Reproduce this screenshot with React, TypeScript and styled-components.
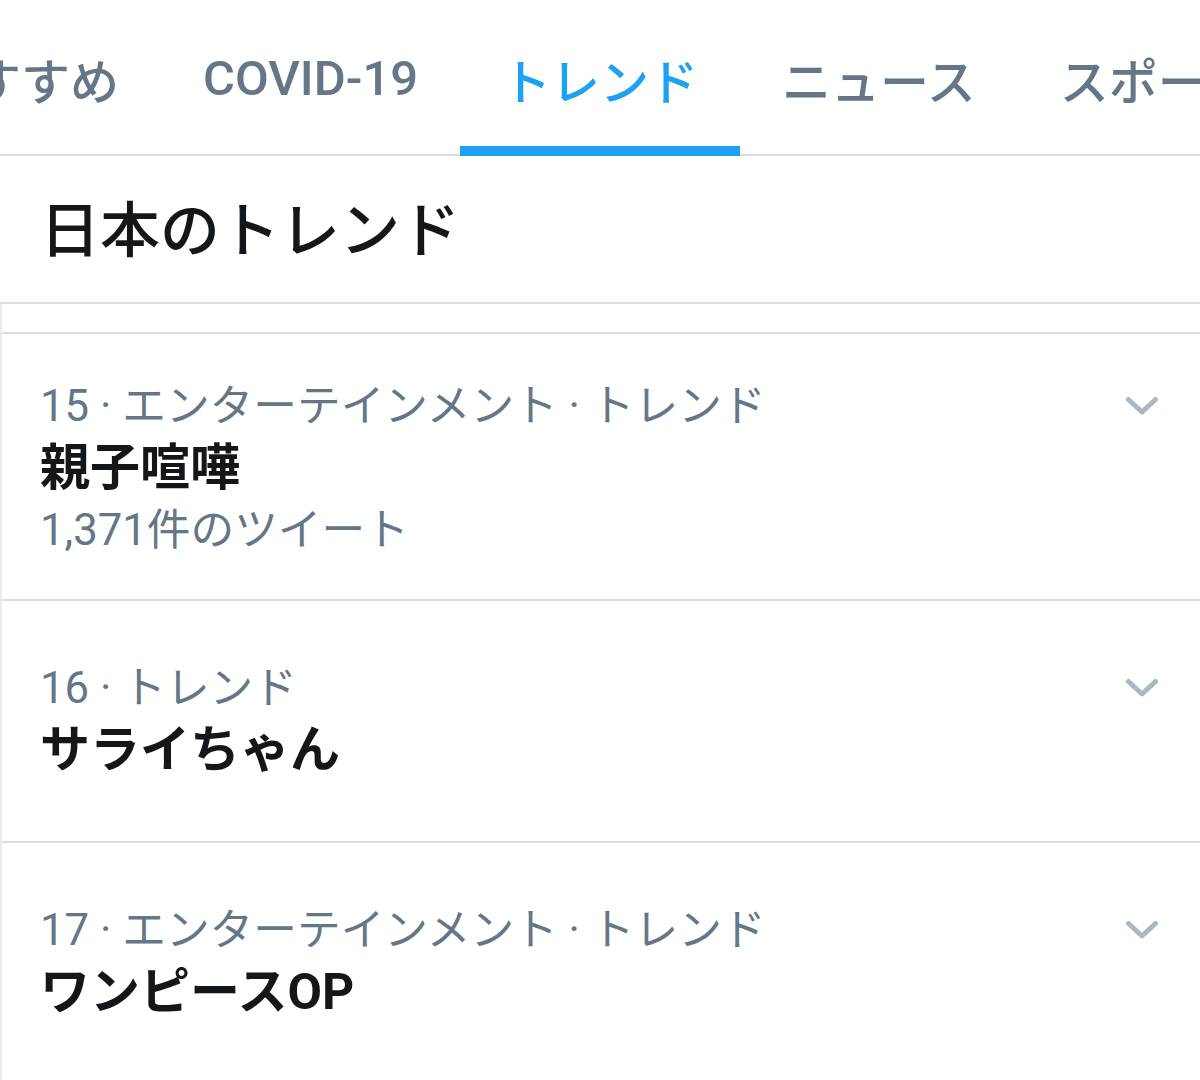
import React from 'react';
import styled, { createGlobalStyle } from 'styled-components';

interface Trend {
  rank: number;
  category: string;
  name: string;
  tweets?: string;
}

const GlobalStyle = createGlobalStyle`
  html, body {
    margin: 0;
    padding: 0;
    background: #ffffff;
    overflow: hidden;
  }
  body {
    font-family: Roboto, "Noto Sans CJK JP", sans-serif;
    -webkit-font-smoothing: antialiased;
  }
`;

const Page = styled.div`
  width: 1200px;
  height: 1080px;
  overflow: hidden;
  background: #ffffff;
`;

const TabBar = styled.nav`
  display: flex;
  height: 156px;
  box-sizing: border-box;
  border-bottom: 2px solid #d8dfe4;
  margin-left: -119px;
  white-space: nowrap;
`;

const Tab = styled.div<{ $active?: boolean }>`
  position: relative;
  display: flex;
  align-items: center;
  padding: 2px 42px 0;
  font-size: 49px;
  font-weight: 500;
  color: ${(p) => (p.$active ? '#1da1f2' : '#657786')};

  &::after {
    content: '';
    display: ${(p) => (p.$active ? 'block' : 'none')};
    position: absolute;
    left: 0;
    right: 0;
    bottom: -2px;
    height: 10px;
    background: #1da1f2;
  }
`;

const Header = styled.header`
  display: flex;
  align-items: center;
  height: 148px;
  box-sizing: border-box;
  padding: 0 0 8px 40px;
  border-bottom: 2px solid #d8dfe4;
  font-size: 60px;
  font-weight: 500;
  color: #14171a;
`;

const List = styled.section`
  border-left: 2px solid #e6ecf0;
`;

const Spacer = styled.div`
  height: 30px;
  box-sizing: border-box;
  border-bottom: 2px solid #d8dfe4;
`;

const Row = styled.div<{ $padTop: number; $padBottom: number }>`
  display: flex;
  align-items: flex-start;
  padding: ${(p) => p.$padTop}px 38px ${(p) => p.$padBottom}px 38px;
  border-bottom: 2px solid #d8dfe4;
`;

const Body = styled.div`
  flex: 1;
  display: flex;
  flex-direction: column;
`;

const Meta = styled.div`
  font-size: 43.7px;
  line-height: 62px;
  color: #657786;
  white-space: nowrap;
`;

const Title = styled.div`
  font-size: 50px;
  line-height: 62px;
  font-weight: 700;
  color: #14171a;
`;

const Count = styled.div`
  font-size: 43.7px;
  line-height: 62px;
  color: #657786;
`;

const Caret = styled.div`
  display: flex;
  align-items: center;
  justify-content: center;
  width: 40px;
  height: 62px;
`;

const Chevron = () => (
  <svg width="34" height="20" viewBox="0 0 34 20" fill="none">
    <path
      d="M3.5 3.5 L17 16 L30.5 3.5"
      stroke="#aab8c2"
      strokeWidth="5"
      strokeLinecap="round"
      strokeLinejoin="round"
    />
  </svg>
);

const tabs = ['おすすめ', 'COVID-19', 'トレンド', 'ニュース', 'スポーツ'];

const trends: Trend[] = [
  { rank: 15, category: 'エンターテインメント · トレンド', name: '親子喧嘩', tweets: '1,371件のツイート' },
  { rank: 16, category: 'トレンド', name: 'サライちゃん' },
  { rank: 17, category: 'エンターテインメント · トレンド', name: 'ワンピースOP' },
];

export default function App() {
  return (
    <Page>
      <GlobalStyle />
      <TabBar>
        {tabs.map((t) => (
          <Tab key={t} $active={t === 'トレンド'}>
            {t}
          </Tab>
        ))}
      </TabBar>
      <Header>日本のトレンド</Header>
      <List>
        <Spacer />
        {trends.map((t, i) => (
          <Row key={t.rank} $padTop={i === 0 ? 41 : 56} $padBottom={i === 0 ? 38 : 60}>
            <Body>
              <Meta>
                {t.rank} · {t.category}
              </Meta>
              <Title>{t.name}</Title>
              {t.tweets && <Count>{t.tweets}</Count>}
            </Body>
            <Caret>
              <Chevron />
            </Caret>
          </Row>
        ))}
      </List>
    </Page>
  );
}
